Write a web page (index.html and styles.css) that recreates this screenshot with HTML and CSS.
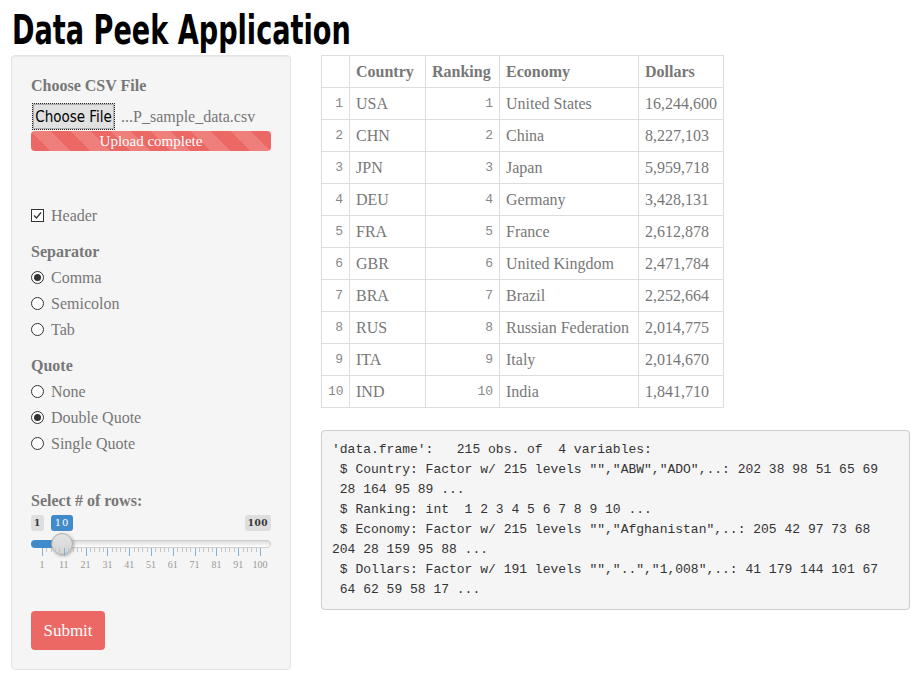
FILE: index.html
```html
<!DOCTYPE html>
<html>
<head>
<meta charset="utf-8">
<title>Data Peek Application</title>
<link rel="stylesheet" href="styles.css">
</head>
<body>
<h2 class="title"><span class="title-text">Data Peek Application</span></h2>
<div class="page">
  <div class="well">
    <label class="ctl-label">Choose CSV File</label>
    <div class="file-row"><span class="file-btn">Choose File</span><span class="file-name">...P_sample_data.csv</span></div>
    <div class="progress"><span>Upload complete</span></div>

    <div class="opt check-first"><span class="box checked"><svg viewBox="0 0 13 13" width="13" height="13"><path d="M3 6.5 L5.5 9 L10 3.5" fill="none" stroke="#333" stroke-width="1.3"/></svg></span>Header</div>

    <label class="ctl-label sec">Separator</label>
    <div class="opt first"><span class="radio on"></span>Comma</div>
    <div class="opt"><span class="radio"></span>Semicolon</div>
    <div class="opt"><span class="radio"></span>Tab</div>

    <label class="ctl-label sec">Quote</label>
    <div class="opt first"><span class="radio"></span>None</div>
    <div class="opt"><span class="radio on"></span>Double Quote</div>
    <div class="opt"><span class="radio"></span>Single Quote</div>

    <label class="ctl-label rows">Select # of rows:</label>
    <div class="slider">
      <span class="irs-min">1</span>
      <span class="irs-single" style="left:20px">10</span>
      <span class="irs-max">100</span>
      <div class="irs-line"></div>
      <div class="irs-bar" style="width:31px"></div>
      <div class="irs-handle" style="left:20px"></div>
      <div class="irs-grid"></div>
      <span class="grid-text" style="left:11px">1</span>
      <span class="grid-text" style="left:32.8px">11</span>
      <span class="grid-text" style="left:54.6px">21</span>
      <span class="grid-text" style="left:76.4px">31</span>
      <span class="grid-text" style="left:98.2px">41</span>
      <span class="grid-text" style="left:120px">51</span>
      <span class="grid-text" style="left:141.8px">61</span>
      <span class="grid-text" style="left:163.6px">71</span>
      <span class="grid-text" style="left:185.4px">81</span>
      <span class="grid-text" style="left:207.2px">91</span>
      <span class="grid-text" style="left:229px">100</span>
    </div>

    <button class="btn-submit">Submit</button>
  </div>

  <div class="main">
    <table class="data">
      <colgroup><col class="c0"><col class="c1"><col class="c2"><col class="c3"><col class="c4"></colgroup>
      <thead>
        <tr><th></th><th>Country</th><th>Ranking</th><th>Economy</th><th>Dollars</th></tr>
      </thead>
      <tbody>
        <tr><td class="num">1</td><td>USA</td><td class="num">1</td><td>United States</td><td>16,244,600</td></tr>
        <tr><td class="num">2</td><td>CHN</td><td class="num">2</td><td>China</td><td>8,227,103</td></tr>
        <tr><td class="num">3</td><td>JPN</td><td class="num">3</td><td>Japan</td><td>5,959,718</td></tr>
        <tr><td class="num">4</td><td>DEU</td><td class="num">4</td><td>Germany</td><td>3,428,131</td></tr>
        <tr><td class="num">5</td><td>FRA</td><td class="num">5</td><td>France</td><td>2,612,878</td></tr>
        <tr><td class="num">6</td><td>GBR</td><td class="num">6</td><td>United Kingdom</td><td>2,471,784</td></tr>
        <tr><td class="num">7</td><td>BRA</td><td class="num">7</td><td>Brazil</td><td>2,252,664</td></tr>
        <tr><td class="num">8</td><td>RUS</td><td class="num">8</td><td>Russian Federation</td><td>2,014,775</td></tr>
        <tr><td class="num">9</td><td>ITA</td><td class="num">9</td><td>Italy</td><td>2,014,670</td></tr>
        <tr><td class="num">10</td><td>IND</td><td class="num">10</td><td>India</td><td>1,841,710</td></tr>
      </tbody>
    </table>
<pre class="output">'data.frame':   215 obs. of  4 variables:
 $ Country: Factor w/ 215 levels "","ABW","ADO",..: 202 38 98 51 65 69
 28 164 95 89 ...
 $ Ranking: int  1 2 3 4 5 6 7 8 9 10 ...
 $ Economy: Factor w/ 215 levels "","Afghanistan",..: 205 42 97 73 68
204 28 159 95 88 ...
 $ Dollars: Factor w/ 191 levels "","..","1,008",..: 41 179 144 101 67
 64 62 59 58 17 ...</pre>
  </div>
</div>
</body>
</html>
```
FILE: styles.css
```css
* { box-sizing: border-box; }
html, body { margin: 0; padding: 0; background: #fff; }
body {
  font-family: "Liberation Serif", "DejaVu Serif", serif;
  font-size: 16px;
  color: #777;
}
.title {
  font-family: "DejaVu Sans Condensed", "DejaVu Sans", sans-serif;
  font-weight: bold;
  font-size: 40px;
  line-height: 44px;
  color: #000;
  margin: 8px 0 3px 12px;
}
.title-text {
  display: inline-block;
  transform: scaleX(0.754);
  transform-origin: 0 50%;
  white-space: nowrap;
}
.page {
  display: grid;
  grid-template-columns: 280px 1fr;
  gap: 30px;
  padding: 0 14px 0 11px;
  align-items: start;
}
.well {
  background: #f5f5f5;
  border: 1px solid #e3e3e3;
  border-radius: 4px;
  box-shadow: inset 0 1px 1px rgba(0,0,0,0.05);
  padding: 19px 19px 19px 19px;
  display: flex;
  flex-direction: column;
  align-items: flex-start;
}
.ctl-label {
  display: block;
  font-weight: bold;
  line-height: 21px;
  height: 21px;
  color: #777;
}
.ctl-label.sec { margin-top: 15px; }
.ctl-label.rows { margin-top: 36px; }
.file-row {
  margin-top: 7px;
  height: 27px;
  display: flex;
  align-items: center;
  width: 100%;
}
.file-btn {
  font-family: "DejaVu Sans Condensed", "Liberation Sans", sans-serif;
  font-size: 15px;
  color: #000;
  background: #e1e1e1;
  border: 1px dotted #222;
  height: 27px;
  width: 83px;
  margin-left: 1px;
  display: flex;
  align-items: center;
  justify-content: center;
  box-shadow: inset 0 0 0 1px #adadad;
}
.file-name {
  margin-left: 6px;
  color: #777;
}
.progress {
  margin-top: 1px;
  width: 240px;
  height: 20px;
  border-radius: 4px;
  background-color: #eb6864;
  background-image: linear-gradient(45deg, rgba(255,255,255,.15) 25%, transparent 25%, transparent 50%, rgba(255,255,255,.15) 50%, rgba(255,255,255,.15) 75%, transparent 75%, transparent);
  background-size: 40px 40px;
  color: #fff;
  text-align: center;
  line-height: 20px;
  font-size: 15px;
}
.opt {
  display: flex;
  align-items: center;
  height: 21px;
  line-height: 21px;
  margin-top: 5px;
  color: #777;
}
.opt.check-first { margin-top: 54px; }
.opt.first { margin-top: 5px; }
.box {
  width: 13px;
  height: 13px;
  border: 1px solid #333;
  background: #fff;
  margin-right: 7px;
  position: relative;
  display: inline-block;
}
.box svg { position: absolute; left: -1px; top: -1px; }
.radio {
  width: 13px;
  height: 13px;
  border: 1px solid #333;
  border-radius: 50%;
  background: #fff;
  margin-right: 7px;
  display: inline-flex;
  align-items: center;
  justify-content: center;
}
.radio.on::after {
  content: "";
  width: 7px;
  height: 7px;
  border-radius: 50%;
  background: #333;
}
.slider {
  position: relative;
  width: 240px;
  height: 57px;
  margin-top: 4px;
}
.irs-min, .irs-max, .irs-single {
  position: absolute;
  top: 0;
  font-family: "DejaVu Serif", serif;
  font-size: 9px;
  line-height: 16px;
  height: 16px;
  padding: 0 3px;
  border-radius: 3px;
  background: #dedede;
  color: #333;
  font-weight: bold;
  letter-spacing: 0.5px;
}
.irs-min { left: 0; }
.irs-max { right: 0; }
.irs-single {
  background: #428bca;
  color: #fff;
  width: 22px;
  text-align: center;
  padding: 0;
  font-weight: normal;
  font-size: 10px;
  letter-spacing: 1px;
}
.irs-line {
  position: absolute;
  left: 0;
  top: 25px;
  width: 240px;
  height: 8px;
  border: 1px solid #ccc;
  border-radius: 8px;
  background: linear-gradient(to bottom, #ddd 0%, #fff 100%);
}
.irs-bar {
  position: absolute;
  left: 0;
  top: 25px;
  height: 8px;
  background: #428bca;
  border-radius: 8px 0 0 8px;
}
.irs-handle {
  position: absolute;
  top: 18px;
  width: 22px;
  height: 22px;
  border-radius: 50%;
  border: 1px solid #aaa;
  background: linear-gradient(to bottom, #e4e4e4, #d4d4d4);
  box-shadow: 1px 1px 3px rgba(0,0,0,0.3);
}
.irs-grid {
  position: absolute;
  left: 11px;
  top: 33px;
  width: 219px;
  height: 8px;
  background-image:
    repeating-linear-gradient(to right, #7fb0de 0 1px, transparent 1px 21.8px),
    repeating-linear-gradient(to right, #c4c4c4 0 1px, transparent 1px 4.36px);
  background-size: 219px 8px, 219px 4px;
  background-repeat: no-repeat;
}
.grid-text {
  position: absolute;
  top: 44px;
  transform: translateX(-50%);
  font-size: 10px;
  line-height: 12px;
  color: #999;
}
.btn-submit {
  margin-top: 39px;
  height: 39px;
  width: 74px;
  border: none;
  border-radius: 4px;
  background: #eb6864;
  color: #fff;
  font-family: "Liberation Serif", "DejaVu Serif", serif;
  font-size: 17px;
  padding: 0;
}
.main { min-width: 0; }
.data {
  border-collapse: collapse;
  table-layout: fixed;
  width: 402px;
}
.c0 { width: 28px; }
.c1 { width: 76px; }
.c2 { width: 74px; }
.c3 { width: 139px; }
.c4 { width: 85px; }
.data th, .data td {
  border: 1px solid #ddd;
  height: 32px;
  padding: 0 5px 0 6px;
  line-height: 21px;
  text-align: left;
  white-space: nowrap;
  overflow: hidden;
  color: #777;
}
.data th { font-weight: bold; }
.data td.num {
  text-align: right;
  font-family: "Liberation Mono", monospace;
  font-size: 13px;
  color: #888;
  padding-right: 6px;
}
.output {
  margin: 22px 0 0 0;
  padding: 9px 10px;
  background: #f5f5f5;
  border: 1px solid #ccc;
  border-radius: 4px;
  font-family: "Liberation Mono", "Courier New", monospace;
  font-size: 13px;
  line-height: 20px;
  color: #333;
  white-space: pre;
  overflow: hidden;
}
```
